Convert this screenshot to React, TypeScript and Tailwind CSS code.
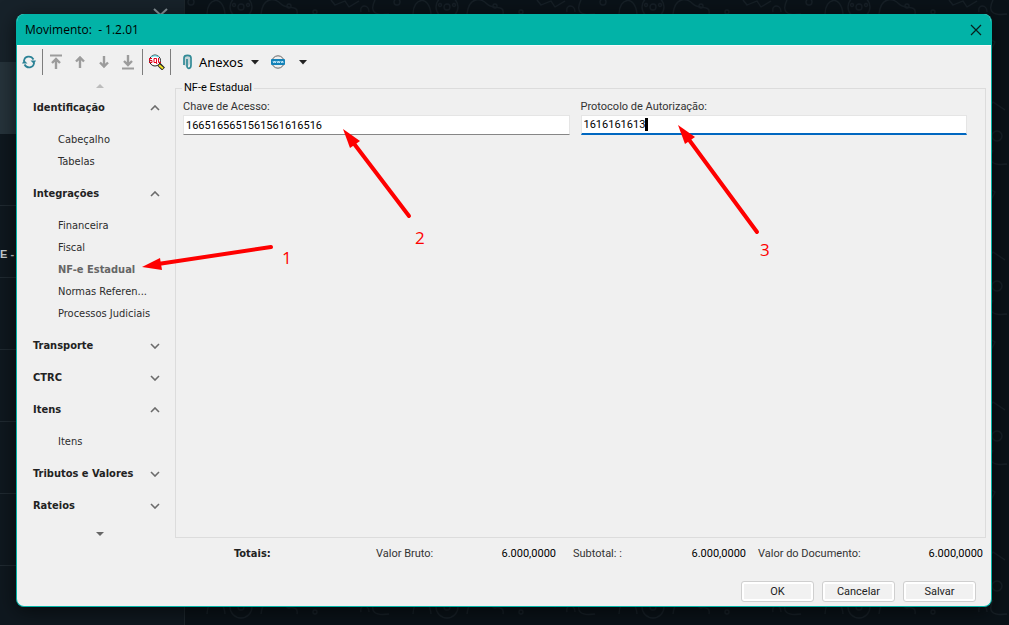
import { useState } from 'react';

const sections = [
  { title: 'Identificação', open: true, items: ['Cabeçalho', 'Tabelas'] },
  { title: 'Integrações', open: true, items: ['Financeira', 'Fiscal', 'NF-e Estadual', 'Normas Referen...', 'Processos Judiciais'] },
  { title: 'Transporte', open: false, items: [] },
  { title: 'CTRC', open: false, items: [] },
  { title: 'Itens', open: true, items: ['Itens'] },
  { title: 'Tributos e Valores', open: false, items: [] },
  { title: 'Rateios', open: false, items: [] },
];

const uiFont = "font-['Roboto',sans-serif] text-[11px] leading-4";
const boldFont = "font-['DejaVu_Sans_Condensed','DejaVu_Sans',sans-serif] font-bold text-[11px] leading-4";

function Backdrop() {
  return (
    <div className="absolute inset-0 flex overflow-hidden" aria-hidden="true">
      <div className="relative w-[185px] shrink-0 border-r border-[#1c262c] bg-[#0f181f]">
        <div className="h-[62px] bg-[#17222a]" />
        <div className="h-[72px] bg-[#26333b]" />
        {[0, 1, 2, 3, 4, 5].map((row) => (
          <div key={row} className="h-[72px] border-b border-[#202a31] pt-10 font-['Liberation_Sans'] text-[11px] leading-4 text-[#c9ced1]">
            {row === 1 && <span className="font-bold">E -</span>}
          </div>
        ))}
        <svg className="absolute top-[8px] left-[153px]" width="15" height="12" viewBox="0 0 15 12" fill="none" stroke="#8c979d" strokeWidth="2">
          <path d="M1 1L13 12M14 1L2 12" />
        </svg>
      </div>
      <svg className="h-full flex-1 bg-[#0a1218]">
        <defs>
          <pattern id="doodles" width="206" height="150" patternUnits="userSpaceOnUse">
            <g fill="none" stroke="#161f26" strokeWidth="1.3" strokeLinejoin="round">
              <circle cx="6" cy="2" r="3" />
              <path d="M22 14c0-16 16-20 18 0M76 14c2-18 14-16 20-10s18 0 16 10M146 0l4 5 10-4 4 6 10-6" />
              <circle cx="56" cy="7" r="11" />
              <circle cx="56" cy="7" r="3" />
              <circle cx="49" cy="5" r="1.5" />
              <circle cx="63" cy="5" r="1.5" />
              <circle cx="104" cy="6" r="2" />
              <circle cx="130" cy="12" r="2" />
              <path d="M190 0c-6 12 0 16 14 14M176 12c-2-8 8-8 8 0" />
              <path d="M4 36l14-6 10 16-14 8zM40 34c10-10 24 2 14 12M70 42h22v18H70zM100 36l12 16 10-14zM140 44c6-12 22-6 20 6M178 34l14 8-8 16" />
              <circle cx="30" cy="74" r="9" />
              <circle cx="30" cy="74" r="2" />
              <path d="M58 70l16 4-4 18-14-4zM90 80c8-14 20 2 12 10M124 70h24v16h-24zM166 72l8 14 14-8" />
              <path d="M2 104l28-6v16l-26 4zM44 102l18 12-14 8zM78 104v12M78 104l10-3v12M106 112c2-16 26-16 26 0M146 102h20v14h-20zM178 116l12-14 12 8" />
              <circle cx="40" cy="110" r="2" />
              <circle cx="98" cy="108" r="3" />
              <path d="M10 136l12-8 10 10-8 10zM52 130h26v12H52zM98 130l18 14M124 132c6-8 16-4 14 6M160 128l20 4-4 16-18-4z" />
              <circle cx="194" cy="136" r="5" />
            </g>
          </pattern>
        </defs>
        <rect width="100%" height="100%" fill="url(#doodles)" />
      </svg>
    </div>
  );
}

function TitleBar() {
  return (
    <header className="flex h-[31px] shrink-0 items-center justify-between bg-[#02b3a7] pr-[7px] pl-2 text-black">
      <h1 className="font-['Open_Sans','Noto_Sans',sans-serif] text-[12px] leading-4 whitespace-pre">Movimento:  - 1.2.01</h1>
      <button type="button" aria-label="Fechar" className="flex size-4 items-center justify-center">
        <svg width="12" height="12" viewBox="0 0 12 12" fill="none" stroke="#08201e" strokeWidth="1.2">
          <path d="M1 1L11 11M11 1L1 11" />
        </svg>
      </button>
    </header>
  );
}

function Arrow({ down, bar }: { down?: boolean; bar?: boolean }) {
  return (
    <svg width="14" height="16" viewBox="0 0 14 16" fill="none" stroke="#9c9c9c" strokeWidth="2.4" className={down ? 'rotate-180' : ''}>
      {bar && <path d="M1 1.500H13" strokeWidth="2" />}
      <path d={bar ? 'M7 5V15M3 9L7 5L11 9' : 'M7 3V14M3 7.500L7 3.500L11 7.500'} />
    </svg>
  );
}

function Caret() {
  return (
    <svg width="8" height="5" viewBox="0 0 8 5" fill="#222">
      <path d="M0 0H8L4 4.500Z" />
    </svg>
  );
}

function Separator() {
  return <span className="h-[26px] w-px bg-[#7d7d7d]" />;
}

function Toolbar() {
  const button = 'flex h-6 w-6 items-center justify-center';
  return (
    <div className="flex h-[35px] shrink-0 items-center border-t border-[#fafafa] pb-0.5">
      <button type="button" aria-label="Atualizar" className="flex h-6 w-[23px] items-center justify-center">
        <svg width="14" height="14" viewBox="0 0 14 14" fill="none" stroke="#2b8296" strokeWidth="1.8">
          <path d="M2 6C2.500 1 9 0 11.500 4.500M12 8C11.500 13 5 14 2.500 9.500" />
          <path d="M8.500 5.500H14L12 9ZM0 8.500H5.500L2 5Z" fill="#2b8296" stroke="none" />
        </svg>
      </button>
      <span className="w-0.5" />
      <Separator />
      <button type="button" aria-label="Primeiro" className={`${button} ml-px`}><Arrow bar /></button>
      <button type="button" aria-label="Anterior" className={button}><Arrow /></button>
      <button type="button" aria-label="Próximo" className={button}><Arrow down /></button>
      <button type="button" aria-label="Último" className={button}><Arrow down bar /></button>
      <span className="w-0.5" />
      <Separator />
      <button type="button" aria-label="Consulta SQL" className="flex h-6 w-[27px] items-center justify-center">
        <svg width="17" height="16" viewBox="0 0 17 16" fill="none">
          <path d="M10 9.500L15.500 15" stroke="#222" strokeWidth="4" />
          <path d="M11 11L15 14.500" stroke="#f0e322" strokeWidth="2" />
          <circle cx="7" cy="6.500" r="5.500" fill="#ffffff" stroke="#222" />
          <path d="M3.500 3C5 1.500 9 1.500 10.500 3" stroke="#66d9e5" strokeWidth="1.400" />
          <path d="M4 4.500H1.500V6.500H4V8.500H1M6 4.500H8.500V8.500H6ZM8 8L9 10M10.500 4V8.500H13" stroke="#e8001b" />
        </svg>
      </button>
      <Separator />
      <button type="button" className="ml-2 flex h-6 items-center">
        <svg width="18" height="16" viewBox="0 0 18 16" fill="none" stroke="#318a96" strokeWidth="1.7">
          <path d="M5 1.500H9L11 4V10L8 13L5 11Z" fill="#c5d5d7" stroke="none" />
          <path d="M5 11V4C5 .5 12 .5 12 4V11C12 15.500 8 15 8 12V5" />
        </svg>
        <span className="ml-0.5 font-['Noto_Sans',sans-serif] text-[13px] leading-4 text-black">Anexos</span>
        <span className="ml-2"><Caret /></span>
      </button>
      <button type="button" aria-label="Web" className="ml-3 flex h-6 items-center">
        <svg width="14" height="14" viewBox="0 0 14 14" fill="none">
          <circle cx="7" cy="7" r="6.200" fill="#eee" stroke="#666" />
          <rect y="4" width="14" height="6" rx="1" fill="#1482b8" />
          <path d="M2 6l.8 2 .8-2 .8 2 .6-2M6 6l.8 2 .8-2 .8 2 .6-2M10 6l.8 2 .8-2 .6 2" stroke="#d9f3ff" strokeWidth=".8" />
        </svg>
        <span className="ml-3.5"><Caret /></span>
      </button>
    </div>
  );
}

function Sidebar() {
  const [active, setActive] = useState('NF-e Estadual');

  return (
    <nav className="w-[158px] shrink-0">
      <button type="button" aria-label="Rolar para cima" className="flex h-3 w-full items-center justify-center pl-2">
        <svg width="8" height="4" viewBox="0 0 8 4" fill="#bcbcbc"><path d="M0 4H8L4 0Z" /></svg>
      </button>
      {sections.map((section) => (
        <div key={section.title}>
          <button type="button" className={`flex h-8 w-full items-center justify-between pr-[15px] pl-4 text-[#222] ${boldFont}`}>
            {section.title}
            <svg width="10" height="6" viewBox="0 0 10 6" fill="none" stroke="#6b6b6b" strokeWidth="1.6">
              <path d={section.open ? 'M1 5L5 1L9 5' : 'M1 1L5 5L9 1'} />
            </svg>
          </button>
          {section.items.length > 0 && (
            <ul className="py-[5px] pl-[41px]">
              {section.items.map((item) => (
                <li key={item}>
                  <button
                    type="button"
                    onClick={() => setActive(item)}
                    className={`flex h-[22px] items-center whitespace-nowrap ${item === active ? `text-[#666] ${boldFont}` : "font-['DejaVu_Sans_Condensed','DejaVu_Sans',sans-serif] text-[11px] leading-4 text-[#2c2c2c]"}`}
                  >
                    {item}
                  </button>
                </li>
              ))}
            </ul>
          )}
        </div>
      ))}
      <button type="button" aria-label="Rolar para baixo" className="flex h-6 w-full items-center justify-center pl-2">
        <svg width="8" height="4" viewBox="0 0 8 4" fill="#666"><path d="M0 0H8L4 4Z" /></svg>
      </button>
    </nav>
  );
}

function Total({ label, value, width }: { label: string; value: string; width: string }) {
  return (
    <div className={`flex justify-between ${width}`}>
      <dt className="text-[#333]">{label}</dt>
      <dd className="text-black">{value}</dd>
    </div>
  );
}

function Annotations() {
  return (
    <svg className="pointer-events-none absolute top-0 left-0 overflow-visible" width="974" height="591" viewBox="17 14 974 591" fill="#fe0000" stroke="#fe0000">
      <g strokeWidth="4" strokeLinecap="round">
        <path d="M271 247L158 264" />
        <path d="M409 216L352 141" />
        <path d="M757 232L687 137" />
      </g>
      <g stroke="none">
        <path d="M142 267L160 258L162 270Z" />
        <path d="M343 129L360 141L350 148Z" />
        <path d="M678 125L695 137L685 144Z" />
      </g>
      <g stroke="none" className="font-['Open_Sans','Noto_Sans',sans-serif] text-[17px]">
        <text x="282" y="264">1</text>
        <text x="415" y="244">2</text>
        <text x="760" y="256">3</text>
      </g>
    </svg>
  );
}

export default function App() {
  const [chave, setChave] = useState('1665165651561561616516');
  const [protocolo, setProtocolo] = useState('1616161613');

  return (
    <div className="relative flex min-h-screen bg-[#0a1218] pt-[14px] pr-[17px] pb-[18px] pl-4">
      <Backdrop />
      <main className="relative flex flex-1 flex-col overflow-hidden rounded-lg border border-t-0 border-[#02b3a7] bg-[#f0f0f0] shadow-[0_4px_20px_rgba(0,0,0,0.6)]">
        <TitleBar />
        <Toolbar />
        <div className="flex">
          <Sidebar />
          <div className={`mr-[5px] flex-1 ${uiFont}`}>
            <fieldset className="h-[458px] border border-[#dcdcdc] px-[7px]">
              <legend className="-ml-px px-0.5 text-black">NF-e Estadual</legend>
              <div className="grid grid-cols-2 gap-[11px] pt-[3px] pr-[11px]">
                <div>
                  <label htmlFor="chave" className="block text-[#333]">Chave de Acesso:</label>
                  <input
                    id="chave"
                    value={chave}
                    onChange={(e) => setChave(e.target.value)}
                    className="block h-5 w-full border border-[#e5e5e5] border-b-[#868686] bg-white px-0.5 text-black outline-none"
                  />
                </div>
                <div className="relative">
                  <label htmlFor="protocolo" className="block text-[#333]">Protocolo de Autorização:</label>
                  <input
                    id="protocolo"
                    value={protocolo}
                    onChange={(e) => setProtocolo(e.target.value)}
                    className="block h-5 w-full border border-b-2 border-[#e5e5e5] border-b-[#0067c0] bg-white px-0.5 text-black outline-none"
                  />
                  <span className="absolute bottom-1 left-16 h-[13px] w-[3px] bg-black" />
                </div>
              </div>
            </fieldset>
          </div>
        </div>
        <dl className={`mr-2 ml-[217px] flex gap-3 ${uiFont}`}>
          <dt className={`w-[130px] text-[#222] ${boldFont}`}>Totais:</dt>
          <Total label="Valor Bruto:" value="6.000,0000" width="w-[185px] pr-[5px]" />
          <Total label="Subtotal: :" value="6.000,0000" width="w-[173px]" />
          <Total label="Valor do Documento:" value="6.000,0000" width="flex-1" />
        </dl>
        <footer className={`mt-auto flex justify-end gap-2 pr-[15px] pb-1 ${uiFont}`}>
          {['OK', 'Cancelar', 'Salvar'].map((label) => (
            <button key={label} type="button" className="h-[21px] w-[73px] rounded-[3px] border border-[#cfcfcf] bg-[#f1f1f1] text-[#222] shadow-[inset_0_0_0_2px_white] hover:bg-white">
              {label}
            </button>
          ))}
        </footer>
        <Annotations />
      </main>
    </div>
  );
}
